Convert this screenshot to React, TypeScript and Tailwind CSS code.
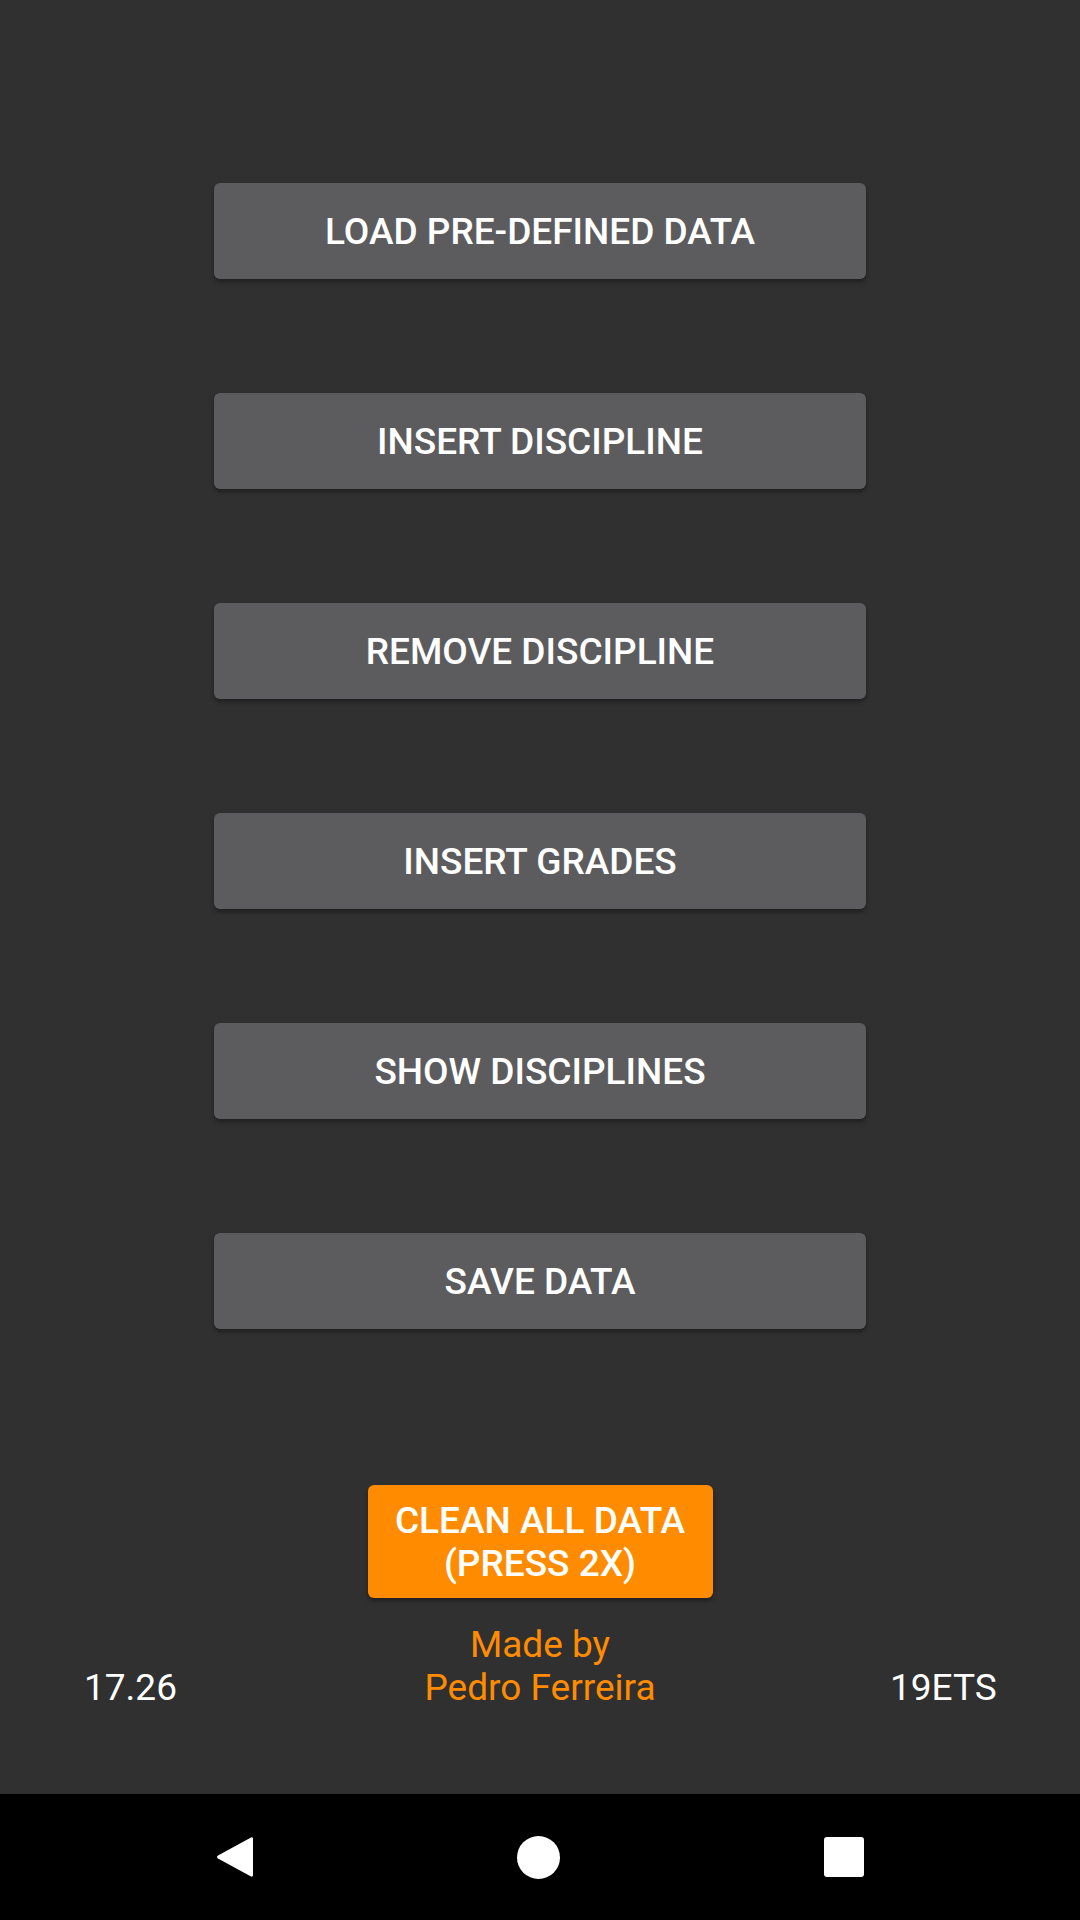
import { useState } from "react";

const actions = [
   "LOAD PRE-DEFINED DATA",
   "INSERT DISCIPLINE",
   "REMOVE DISCIPLINE",
   "INSERT GRADES",
   "SHOW DISCIPLINES",
   "SAVE DATA",
];

function NavBar() {
   return (
      <nav className="h-[126px] bg-black flex items-center justify-center">
         <div className="w-[647px] flex items-center justify-between">
            <svg width="36" height="42" viewBox="0 0 36 42">
               <path
                  d="M34 1.5 C35.2 1 36 1.8 36 3 L36 39 C36 40.2 35.2 41 34 40.5 L1 22.5 C-0.3 21.7 -0.3 20.3 1 19.5 Z"
                  fill="white"
               />
            </svg>
            <div className="w-[43px] h-[43px] rounded-full bg-white" />
            <div className="w-[40px] h-[40px] rounded-[3px] bg-white" />
         </div>
      </nav>
   );
}

export default function App() {
   const [presses, setPresses] = useState(0);

   return (
      <div className="w-[1080px] h-[1920px] flex flex-col bg-[#303030] font-['Roboto',sans-serif]">
         <main className="flex-1 flex flex-col items-center pt-[183px]">
            <div className="flex flex-col gap-[114px]">
               {actions.map((label) => (
                  <button
                     key={label}
                     className="w-[652px] h-[96px] pt-[2px] rounded-[6px] bg-[#5c5c5e] text-white text-[37px] font-medium shadow-[0_3px_4px_rgba(0,0,0,0.35)]"
                  >
                     {label}
                  </button>
               ))}
            </div>

            <button
               onClick={() => setPresses((p) => p + 1)}
               className="mt-[156px] w-[345px] h-[113px] pt-[1px] rounded-[6px] bg-[#ff8c00] text-white text-[37px] font-medium leading-[43px] shadow-[0_3px_4px_rgba(0,0,0,0.35)]"
            >
               CLEAN ALL DATA
               <br />
               (PRESS 2X)
            </button>

            <div className="w-full mt-[25px] px-[84px] flex items-end justify-between text-[37px] leading-[43px]">
               <span className="text-white w-[106px]">17.26</span>
               <p className="text-[#ff8c00] text-center">
                  Made by
                  <br />
                  Pedro Ferreira
               </p>
               <span className="text-white w-[106px] text-right">
                  {presses > 1 ? "19ETS" : "19ETS"}
               </span>
            </div>
         </main>
         <NavBar />
      </div>
   );
}
